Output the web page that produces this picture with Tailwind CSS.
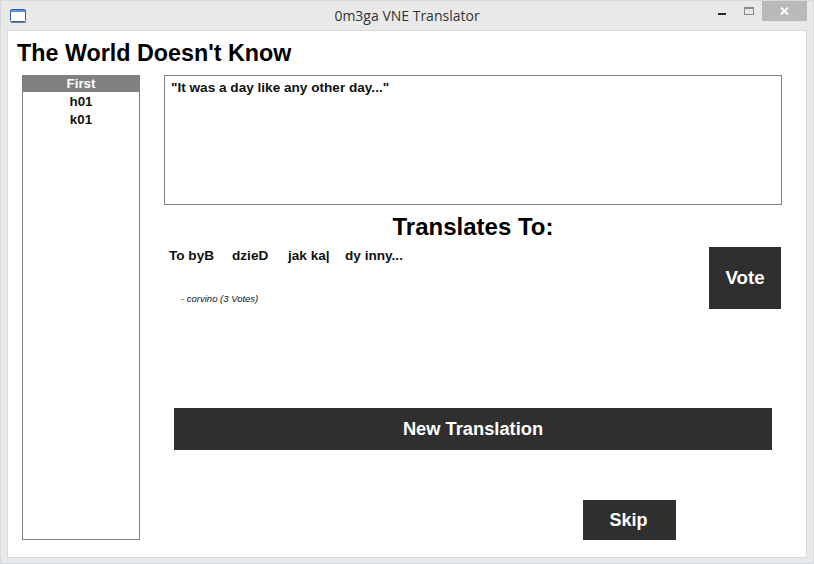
<!DOCTYPE html>
<html lang="en">
  <head>
    <meta charset="UTF-8" />
    <title>0m3ga VNE Translator</title>
    <script src="https://cdn.jsdelivr.net/npm/@tailwindcss/browser@4"></script>
  </head>
  <body class="bg-white font-['Liberation_Sans',Arial,sans-serif]">
    <!-- Window frame -->
    <div class="w-[814px] h-[564px] flex flex-col bg-[#e9e9e9] border border-[#d4dadd] overflow-hidden">
      <!-- Title bar -->
      <div class="h-[29px] shrink-0 flex items-start relative">
        <svg class="ml-[9px] mt-[8px]" width="17" height="14" viewBox="0 0 17 14">
          <rect x="0.5" y="0.5" width="15" height="12" rx="1" fill="#fff" stroke="#2f5f9e" />
          <rect x="1" y="1" width="14" height="2" fill="#5b93d6" />
          <rect x="1" y="13" width="15" height="1" fill="#6b7f99" />
        </svg>
        <div class="absolute left-0 right-0 top-[6px] text-center text-[14px] leading-[18px] text-[#333] font-['Open_Sans',sans-serif]">0m3ga VNE Translator</div>
        <div class="ml-auto flex items-start">
          <div class="w-[8px] h-[2px] mt-[12px] bg-[#2b2b2b]"></div>
          <div class="w-[10px] h-[8px] mt-[6px] ml-[18px] border border-[#8a8a8a] border-t-2"></div>
          <div class="w-[45px] h-[20px] ml-[8px] mr-[6px] bg-[#b9b9b9] flex items-center justify-center">
            <svg width="9" height="8" viewBox="0 0 9 8">
              <path d="M1 0.5 L8 7.5 M8 0.5 L1 7.5" stroke="#fff" stroke-width="2" fill="none" />
            </svg>
          </div>
        </div>
      </div>

      <!-- Client area -->
      <div class="w-[800px] h-[528px] ml-[6px] bg-white border border-[#d9d9d9] pl-[9px]">
        <h1 class="text-[23.3px] leading-[28px] font-bold text-black mt-[8px]">The World Doesn't Know</h1>
        <div class="flex mt-[8px] ml-[5px]">
          <!-- Scene list -->
          <div class="w-[118px] h-[465px] border border-[#808080] text-center text-[13.4px] leading-[18px] font-bold text-[#111]">
            <div class="bg-[#808080] text-white h-[16px] leading-[16px]">First</div>
            <div class="mt-[1px]">h01</div>
            <div>k01</div>
          </div>

          <div class="w-[618px] ml-[24px]">
            <div class="h-[130px] border border-[#808080] px-[6px] pt-[3px] text-[13.6px] leading-[18px] font-bold text-[#111]">"It was a day like any other day..."</div>
            <div class="text-center text-[24px] leading-[28px] font-bold text-black mt-[8px]">Translates To:</div>

            <div class="flex mt-[6px] pl-[5px] pr-[1px] h-[62px]">
              <div class="flex-1">
                <div class="flex text-[13.6px] leading-[18px] font-bold text-[#111]">
                  <span class="w-[63px]">To byB</span>
                  <span class="w-[56px]">dzieD</span>
                  <span class="w-[57px]">jak ka|</span>
                  <span>dy inny...</span>
                </div>
                <div class="text-[9.5px] leading-[12px] italic text-[#111] mt-[28px] ml-[12px]">- corvino (3 Votes)</div>
              </div>
              <button class="w-[72px] h-[62px] bg-[#2f2f2f] text-white text-[18.7px] font-bold">Vote</button>
            </div>

            <button class="block w-[598px] h-[42px] ml-[10px] mt-[99px] bg-[#2f2f2f] text-white text-[18.3px] font-bold">New Translation</button>
            <button class="block w-[93px] h-[40px] ml-[419px] mt-[50px] pr-[2px] bg-[#2f2f2f] text-white text-[18px] font-bold">Skip</button>
          </div>
        </div>
      </div>
    </div>
  </body>
</html>
